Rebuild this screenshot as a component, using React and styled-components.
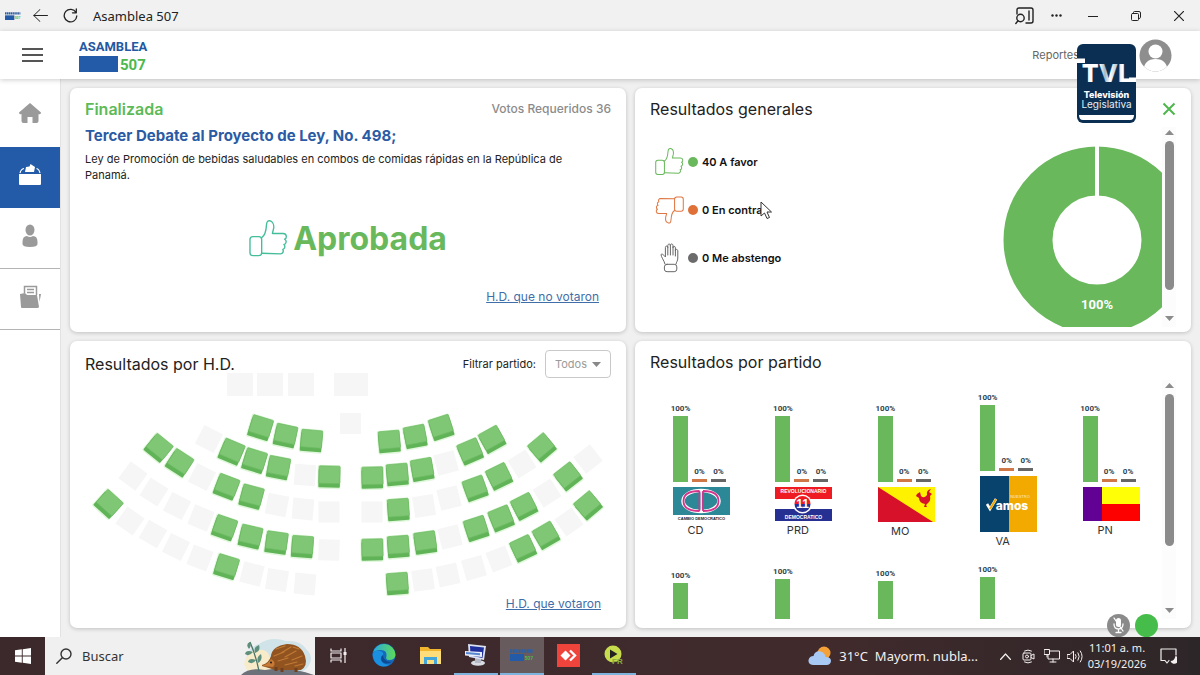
import React from "react";
import styled, { createGlobalStyle } from "styled-components";

const GlobalStyle = createGlobalStyle`
  * { box-sizing: border-box; }
  body { margin: 0; background: #f0f0f0; font-family: Inter, "Open Sans", sans-serif; color: #222; }
  button { border: 0; padding: 0; background: none; font: inherit; color: inherit; cursor: pointer; }
  h1, h2, p, ul, figure { margin: 0; padding: 0; }
  ul { list-style: none; }
  svg { display: block; }
`;

const SYSTEM_FONT = `"Noto Sans", "Open Sans", sans-serif`;

/* ---------- window shell ---------- */

const Screen = styled.div`
  display: flex;
  flex-direction: column;
  height: 100vh;
  min-height: 640px;
`;

const TitleBar = styled.div`
  display: flex;
  align-items: center;
  flex: none;
  height: 31px;
  padding: 0 0 0 4px;
  background: #f1f1f1;
  color: #222;
  font: 13px/20px ${SYSTEM_FONT};
`;

const BarButton = styled.button`
  display: grid;
  place-items: center;
  flex: none;
  width: ${(p) => p.$w || 30}px;
  height: 30px;
`;

const WindowTitle = styled.span`
  margin-left: 11px;
  flex: 1;
`;

const TopBar = styled.header`
  position: relative;
  z-index: 2;
  display: flex;
  align-items: center;
  flex: none;
  height: 48px;
  padding: 0 28px 0 22px;
  background: #fff;
  box-shadow: 0 1px 5px rgba(0, 0, 0, 0.2);
`;

const Brand = styled.a`
  margin-left: 36px;
  margin-right: auto;
`;

const TopLink = styled.a`
  margin-right: 60px;
  color: #666;
  font-size: 11px;
  text-decoration: none;
`;

const Channel = styled.div`
  position: absolute;
  top: 13px;
  right: 64px;
`;

const Body = styled.div`
  position: relative;
  display: flex;
  flex: 1;
  min-height: 0;
`;

const Sidebar = styled.nav`
  flex: none;
  width: 61px;
  background: #fff;
  border-right: 1px solid #e2e2e2;
`;

const SideItem = styled.button`
  display: grid;
  place-items: center;
  width: 100%;
  height: ${(p) => (p.$first ? 68 : 61)}px;
  padding-bottom: ${(p) => (p.$first ? 0 : 5)}px;
  color: ${(p) => (p.$active ? "#fff" : "#9a9a9a")};
  background: ${(p) => (p.$active ? "#235ba8" : "#fff")};
  border-bottom: ${(p) => (p.$line ? "1px solid #b4b4b4" : "0")};
`;

const Panels = styled.main`
  display: grid;
  flex: 1;
  min-width: 0;
  grid-template-columns: repeat(2, minmax(0, 1fr));
  grid-template-rows: minmax(0, 244fr) minmax(0, 287fr);
  gap: 9px;
  padding: 9px;
`;

const Card = styled.section`
  display: flex;
  flex-direction: column;
  min-height: 0;
  padding: ${(p) => p.$pad};
  background: #fff;
  border-radius: 7px;
  box-shadow: 0 1px 4px rgba(0, 0, 0, 0.2);
`;

const CardHead = styled.div`
  display: flex;
  align-items: center;
  justify-content: space-between;
  flex: none;
  height: ${(p) => p.$h || 20}px;
`;

const CardTitle = styled.h2`
  font-size: 16px;
  line-height: 20px;
  font-weight: 400;
`;

/* ---------- vote summary ---------- */

const Status = styled.span`
  color: #5cba57;
  font-size: 16px;
  line-height: 20px;
  font-weight: 600;
`;

const Required = styled.span`
  color: #8b8b8b;
  font-size: 12px;
  line-height: 20px;
  font-weight: 500;
`;

const BillTitle = styled.h1`
  margin-top: 7px;
  color: #2b5ba4;
  font-size: 15px;
  line-height: 20px;
  font-weight: 700;
`;

const BillText = styled.p`
  margin-top: 5px;
  max-width: 500px;
  font-size: 11px;
  line-height: 16px;
`;

const Verdict = styled.div`
  display: flex;
  align-items: center;
  justify-content: center;
  gap: 5px;
  flex: 1;
  padding-top: 6px;
  color: #69b85c;
  font-size: 32px;
  line-height: 40px;
  font-weight: 700;
`;

const VoteLink = styled.a`
  align-self: flex-end;
  margin-right: ${(p) => p.$inset}px;
  color: #3f6ea8;
  font-size: 12px;
  line-height: 16px;
  text-decoration: underline;
`;

/* ---------- general results ---------- */

const Close = styled.button`
  width: 14px;
  height: 14px;
  color: #4fb64c;
`;

const ScrollArea = styled.div`
  display: flex;
  flex: 1;
  min-height: 0;
  margin-top: 8px;
`;

const VoteList = styled.ul`
  flex: 1;
  padding: 11px 0 0 5px;
`;

const VoteItem = styled.li`
  display: flex;
  align-items: center;
  height: 48px;
  font-size: 11px;
  font-weight: 600;
  color: #111;
`;

const VoteIcon = styled.span`
  display: grid;
  place-items: center;
  width: 29px;
`;

const Dot = styled.i`
  width: 10px;
  height: 10px;
  margin: 0 4px;
  border-radius: 50%;
  background: ${(p) => p.$color};
`;

const DonutBox = styled.div`
  flex: none;
  align-self: flex-end;
`;

const Rail = styled.div`
  display: flex;
  flex-direction: column;
  align-items: center;
  flex: none;
  width: 14px;
  padding: 3px 0 6px;
  gap: 6px;
  background: #fcfcfc;
`;

const Track = styled.div`
  display: flex;
  flex: 1;
`;

const Thumb = styled.div`
  width: 9px;
  height: ${(p) => p.$size}%;
  border-radius: 5px;
  background: #8b8b8b;
`;

/* ---------- seats ---------- */

const Filter = styled.label`
  display: flex;
  align-items: center;
  gap: 9px;
  font-size: 11px;
`;

const SelectWrap = styled.span`
  display: grid;
  align-items: center;
  > * { grid-area: 1 / 1; }
  > svg { justify-self: end; margin-right: 10px; pointer-events: none; }
`;

const Select = styled.select`
  appearance: none;
  width: 66px;
  height: 28px;
  padding: 0 9px;
  border: 1px solid #c9c9c9;
  border-radius: 4px;
  background: #fff;
  color: #9a9a9a;
  font: 11px Inter, sans-serif;
`;

const SeatMap = styled.svg`
  flex: 1;
  width: 100%;
  min-height: 0;
  margin-top: -5px;
`;

/* ---------- parties ---------- */

const PartyGrid = styled.div`
  display: grid;
  flex: 1;
  grid-template-columns: repeat(5, 1fr);
  grid-auto-rows: max-content;
  align-items: center;
  row-gap: 16px;
  padding-top: 13px;
  overflow: hidden;
`;

const Party = styled.figure`
  width: 57px;
  margin-left: 23px;
`;

const Bars = styled.div`
  display: flex;
  align-items: flex-end;
  gap: 4px;
  margin-bottom: 5px;
`;

const Bar = styled.div`
  display: flex;
  flex-direction: column;
  align-items: center;
  gap: 2px;
  width: 15px;
  white-space: nowrap;
  color: #2f3f4c;
  font: 700 8px/10px Roboto, sans-serif;
  &::after {
    content: "";
    width: 15px;
    height: ${(p) => p.$h}px;
    background: ${(p) => p.$color};
  }
`;

const PartyLogo = styled.div`
  height: ${(p) => p.$h}px;
`;

const PartyName = styled.figcaption`
  margin: 1px 12px 0 0;
  color: #333;
  font-size: 11px;
  line-height: 16px;
  text-align: center;
`;

const Floating = styled.div`
  position: absolute;
  right: 42px;
  bottom: 0;
  display: flex;
  gap: 5px;
`;

const RoundButton = styled.button`
  display: grid;
  place-items: center;
  width: 23px;
  height: 23px;
  border-radius: 50%;
  background: ${(p) => p.$bg};
`;

const ContraText = styled.span`
  position: relative;
  white-space: nowrap;
`;

const Pointer = styled.svg`
  position: absolute;
  left: calc(100% - 3px);
  top: -2px;
`;

/* ---------- taskbar ---------- */

const TaskBar = styled.footer`
  display: flex;
  flex: none;
  height: 38px;
  background: linear-gradient(90deg, #3b292c, #402a2c 70%, #2d2628);
  color: #f4f0f0;
  font: 13px/18px ${SYSTEM_FONT};
`;

const Start = styled.button`
  display: grid;
  place-items: center;
  width: 45px;
`;

const Search = styled.label`
  display: flex;
  align-items: center;
  width: 270px;
  padding-left: 11px;
  background: #f0f0f0;
  color: #333;
`;

const SearchInput = styled.input`
  flex: 1;
  min-width: 0;
  margin-left: 10px;
  padding: 0;
  border: 0;
  outline: 0;
  background: none;
  font: 13px ${SYSTEM_FONT};
  color: #333;
  &::placeholder { color: #333; opacity: 1; }
`;

const Task = styled.button`
  display: grid;
  place-items: center;
  width: 44px;
  margin: 0 1px;
  border-bottom: 2px solid ${(p) => (p.$open ? "#7cb4dd" : "transparent")};
  background: ${(p) => (p.$active ? "#675b5e" : "none")};
  background-clip: padding-box;
`;

const Tray = styled.div`
  display: flex;
  align-items: center;
  margin-left: auto;
  padding-right: 12px;
`;

const Weather = styled.button`
  display: flex;
  align-items: center;
  gap: 7px;
  margin-right: 16px;
`;

const TrayButton = styled.button`
  display: grid;
  place-items: center;
  width: ${(p) => p.$w || 23}px;
  height: 38px;
`;

const Clock = styled.time`
  width: 62px;
  font-size: 11px;
  line-height: 16px;
  text-align: center;
`;

/* ---------- drawings ---------- */

const stroke = { fill: "none", stroke: "currentColor", strokeLinecap: "round", strokeLinejoin: "round" };

function ThumbIcon({ color, size, down, weight = 1.4 }) {
  return (
    <svg width={size} height={size} viewBox="-1 0 40 39" style={{ color }}>
      <g {...stroke} strokeWidth={weight} transform={down ? "rotate(180 19 18.5)" : undefined}>
        <rect x="0" y="16.5" width="12" height="19.5" rx="3" />
        <path d="M12 17.5C15 15.8 16.5 12 17 4C17.2 1 18.5 0 20.3 .3C23.3 1 24.8 4.5 24.3 8L23 13.3H34C38 13.3 38 18.2 35.6 19.2C38 20.7 37.3 24.2 34.8 24.6C36.5 26.4 35.8 29 33.7 29.6C34.8 31.8 33.6 34.2 31.4 34.2L12 33.6" />
      </g>
    </svg>
  );
}

function HandIcon() {
  return (
    <svg width="20" height="30" viewBox="0 0 20 30" style={{ color: "#666" }}>
      <g {...stroke} strokeWidth="1">
        <path d="M5 21C4 17 1 14 1 11.5C2.6 10.3 4 12.5 5.4 14V4.4C5.4 2.6 7.8 2.6 7.8 4.4V2.6C7.8 .6 10.4 .6 10.4 2.6V2.2C10.6 .4 13 .6 13 2.6V4.6C13.2 3 15.4 3 15.4 4.8V7.5C15.6 6 17.8 6 17.8 8V15C17.8 18 16.3 19 16 21" />
        <path d="M7.8 4.4V12M10.4 2.6V12M13 4V12M15.4 7V13" />
        <rect x="4.4" y="21.3" width="12.4" height="7.4" rx="2.6" />
      </g>
    </svg>
  );
}

function BrandLogo() {
  return (
    <svg width="72" height="40" viewBox="0 0 72 40" role="img" aria-label="Asamblea 507">
      <text x="0" y="16" fontFamily="Roboto, sans-serif" fontWeight="700" fontSize="13" fill="#2358a2">ASAMBLEA</text>
      <rect x="0" y="21" width="39" height="16" fill="#235ba8" />
      <text x="41" y="35" fontFamily="Roboto, sans-serif" fontWeight="700" fontSize="15" fill="#4cb84d">507</text>
    </svg>
  );
}

function ChannelLogo() {
  return (
    <svg width="59" height="79" viewBox="0 0 59 79">
      <defs>
        <linearGradient id="ribbon" x1="0" x2="1">
          <stop offset="0" stopColor="#fff" />
          <stop offset=".36" stopColor="#fff" />
          <stop offset=".46" stopColor="#9fb9cd" />
          <stop offset=".56" stopColor="#fff" />
          <stop offset=".7" stopColor="#b4c8d8" />
          <stop offset=".8" stopColor="#fff" />
        </linearGradient>
      </defs>
      <rect width="59" height="79" rx="6" fill="#0b2f52" />
      <path d="M0 14.400H8V19H0ZM52 33.400H59V38H52Z" fill="#fff" />
      <text x="30" y="38" textAnchor="middle" fontFamily="Inter, sans-serif" fontWeight="800" fontSize="25" fill="url(#ribbon)">TVL</text>
      <text x="29.500" y="54" textAnchor="middle" fontFamily="Inter, sans-serif" fontWeight="800" fontSize="9" fill="#fff">Televisión</text>
      <text x="29.500" y="64" textAnchor="middle" fontFamily="Inter, sans-serif" fontSize="10" fill="#e7edf3">Legislativa</text>
      <path d="M2 71H57Q57 76 53 76H6Q2 76 2 71Z" fill="#fff" />
    </svg>
  );
}

function Donut() {
  return (
    <svg width="159" height="181" viewBox="1003 146 159 181" role="img" aria-label="100% a favor">
      <circle cx="1097" cy="240" r="69" fill="none" stroke="#69b85c" strokeWidth="49" />
      <path d="M1097 146V197" stroke="#fff" strokeWidth="4" />
      <text x="1097" y="309" textAnchor="middle" fontFamily="Roboto, sans-serif" fontWeight="700" fontSize="13" fill="#fff">100%</text>
    </svg>
  );
}

function ScrollRail({ size }) {
  return (
    <Rail>
      <svg width="9" height="5"><path d="M0 5L4.500 0L9 5Z" fill="#8b8b8b" /></svg>
      <Track><Thumb $size={size} /></Track>
      <svg width="9" height="5"><path d="M0 0L4.500 5L9 0Z" fill="#8b8b8b" /></svg>
    </Rail>
  );
}

/* seat centre x, centre y, rotation in degrees */
const VOTED = [
  [260, 428, 17], [285, 436, 12], [311, 441, 5], [231, 452, 23], [254, 461, 17], [278, 468, 11], [329, 477, 1],
  [158, 448, 39], [179, 463, 33], [226, 487, 21], [251, 497, 15], [108, 504, 42],
  [224, 528, 19], [250, 537, 13], [276, 543, 8], [302, 547, 4], [226, 567, 17],
  [389, 442, -5], [415, 437, -11], [441, 428, -18], [470, 452, -23], [492, 440, -29], [542, 448, -40],
  [372, 478, -1], [397, 475, -5], [422, 470, -10], [475, 489, -20], [499, 477, -26], [568, 477, -38],
  [398, 510, -4], [372, 550, -1], [398, 547, -4], [425, 543, -8], [476, 529, -18], [501, 519, -22],
  [524, 507, -27], [588, 506, -40], [523, 549, -25], [546, 536, -30], [397, 584, -4],
];

const EMPTY = [
  [209, 439, 27], [133, 476, 36], [154, 492, 32], [177, 506, 27], [201, 518, 22], [202, 477, 27], [305, 475, 4],
  [277, 505, 11], [303, 509, 5], [329, 512, 0], [130, 521, 35], [153, 534, 30], [176, 547, 26], [200, 558, 21],
  [329, 550, 2], [252, 574, 14], [277, 580, 9], [305, 584, 5], [446, 463, -15], [522, 464, -32], [588, 459, -38],
  [372, 512, 0], [424, 506, -9], [449, 498, -14], [547, 493, -32], [450, 537, -14], [569, 522, -35],
  [423, 580, -8], [448, 575, -12], [474, 568, -16], [499, 559, -21],
];

const DESKS = [[227, 373, 26, 23], [257, 373, 26, 23], [288, 373, 26, 23], [334, 373, 34, 23], [340, 413, 21, 21]];

function Seats() {
  return (
    <SeatMap viewBox="85 373 526 223" role="img" aria-label="Votos por curul">
      <g fill="#f6f6f6">
        {DESKS.map(([x, y, w, h]) => <rect key={x} x={x} y={y} width={w} height={h} />)}
        {EMPTY.map(([x, y, a]) => (
          <rect key={`${x}-${y}`} x="-10.500" y="-10.500" width="21" height="21" transform={`translate(${x} ${y}) rotate(${a})`} />
        ))}
      </g>
      {VOTED.map(([x, y, a]) => (
        <g key={`${x}-${y}`} transform={`translate(${x} ${y}) rotate(${a})`}>
          <rect x="-11.500" y="-12" width="23" height="24" rx="2" fill="#dff7da" />
          <rect x="-10.500" y="-8" width="21.500" height="18.500" rx="1" fill="#60b356" />
          <rect x="-10" y="-11" width="21" height="17.500" rx="1" fill="#7fc675" stroke="#6dbb63" strokeWidth=".7" />
        </g>
      ))}
    </SeatMap>
  );
}

const logoText = { textAnchor: "middle", fontFamily: "Liberation Sans, sans-serif", fontWeight: 700 };

const LOGOS = {
  CD: (
    <svg width="57" height="34" viewBox="0 0 57 34">
      <rect width="57" height="28" fill="#2c8797" />
      <ellipse cx="28" cy="14" rx="18" ry="10.500" fill="none" stroke="#fff" strokeWidth="3.500" />
      <path d="M26.500 4V24M30 4V24M26.500 4Q10.500 4 10.500 14T26.500 24M30 4Q45.500 4 45.500 14T30 24" fill="none" stroke="#d5348c" strokeWidth="1.800" />
      <path d="M28.200 4V24" stroke="#fff" strokeWidth="1.200" />
      <text {...logoText} x="28.500" y="32.500" fontSize="4" fill="#222">CAMBIO DEMOCRATICO</text>
    </svg>
  ),
  PRD: (
    <svg width="57" height="34" viewBox="0 0 57 34">
      <rect width="57" height="34" fill="#fff" />
      <rect width="57" height="12" fill="#ee1c22" />
      <rect y="22" width="57" height="12" fill="#262f92" />
      <circle cx="27.500" cy="17" r="9.500" fill="#fff" />
      <path d="M19.500 17A8 8 0 0 1 35.500 17Z" fill="#ee1c22" />
      <path d="M19.500 17A8 8 0 0 0 35.500 17Z" fill="#262f92" />
      <text {...logoText} x="27.500" y="21" fontSize="12" fill="#fff">11</text>
      <text {...logoText} x="28.500" y="6" fontSize="5" fill="#fff">REVOLUCIONARIO</text>
      <text {...logoText} x="28.500" y="32" fontSize="5" fill="#fff">DEMOCRATICO</text>
    </svg>
  ),
  MO: (
    <svg width="57" height="35" viewBox="0 0 57 35">
      <rect width="57" height="35" fill="#fff200" />
      <path d="M0 0L55 35H0Z" fill="#d8112b" />
      <path d="M39 7L42 5L43 9Q46 12 49 8Q48 3 53 2L51 5L54 7L52 9Q53 14 50 16L48 18L49 20H46L47 17Q41 16 41 11L38 9Z" fill="#d8112b" />
    </svg>
  ),
  VA: (
    <svg width="57" height="56" viewBox="0 0 57 56">
      <rect width="29" height="56" fill="#07436d" />
      <rect x="29" width="28" height="56" fill="#f2a900" />
      <path d="M7 28L10 33L16 23" fill="none" stroke="#fff" strokeWidth="2.600" />
      <path d="M10 33L16 23" stroke="#f2a900" strokeWidth="2" />
      <text {...logoText} fontFamily="Inter, sans-serif" fontWeight="800" x="32" y="34" fontSize="12" fill="#fff">amos</text>
      <text {...logoText} x="40" y="22" fontSize="4" fill="#f9d88c">NUESTRO</text>
    </svg>
  ),
  PN: (
    <svg width="57" height="34" viewBox="0 0 57 34">
      <rect width="57" height="34" fill="#fd0100" />
      <rect x="19" width="38" height="17" fill="#ffff05" />
      <rect width="19" height="34" fill="#620295" />
    </svg>
  ),
};

const PARTIES = [
  { name: "CD", h: 34 }, { name: "PRD", h: 34 }, { name: "MO", h: 35 }, { name: "VA", h: 56 }, { name: "PN", h: 34 },
  { h: 36 }, { h: 44 }, { h: 40 }, { h: 48 },
];

function EchidnaArt() {
  return (
    <svg width="74" height="37" viewBox="0 0 74 37">
      <path d="M5 24Q5 10 18 6Q30 -2 45 3Q60 2 66 12Q74 20 66 30Q60 36 40 36Q10 36 5 24Z" fill="#cfe3e8" />
      <path d="M3 26Q6 12 18 12Q28 10 30 24V36H8Z" fill="#f7ebca" />
      <path d="M0 37Q8 29 24 32Q48 28 73 37Z" fill="#6d7179" />
      <path d="M21 27Q28 25 30 18Q31 8 46 6Q60 6 64 18Q67 28 60 32H34Q28 30 21 28Z" fill="#91531f" />
      <path d="M35 11L44 8M40 15L50 9M33 18L43 14M44 19L55 13M51 22L61 18M37 23L47 20M44 27L56 24M54 28L62 26M52 9L58 11" stroke="#c07a35" strokeWidth="1.200" strokeLinecap="round" />
      <path d="M30 21Q36 24 32 29L21 28Q27 26 30 21Z" fill="#c67a36" />
      <circle cx="30" cy="24.500" r="1" fill="#222" />
      <path d="M35 29V33M41 30V34M55 30V34" stroke="#70401e" strokeWidth="3" />
      <path d="M18 33Q15 18 9 4" fill="none" stroke="#4b7565" strokeWidth="1.300" />
      <path d="M9 4Q4 6 8 11Q11 8 9 4ZM12 14Q5 11 4 16Q8 19 12 14ZM14 15Q20 13 18 7Q12 9 14 15ZM15 22Q8 19 7 24Q12 27 15 22ZM17 25Q22 22 20 16Q15 19 17 25Z" fill="#5e8f7c" />
    </svg>
  );
}

function EdgeLogo() {
  return (
    <svg width="24" height="24" viewBox="0 0 24 24">
      <defs>
        <linearGradient id="edgeTop" x1="0" x2="1"><stop offset="0" stopColor="#2aa8e0" /><stop offset="1" stopColor="#5ddb57" /></linearGradient>
      </defs>
      <circle cx="12" cy="12" r="11.500" fill="#1469bd" />
      <path d="M.8 10A11.500 11.500 0 0 1 23.500 12Q23 17 17 17Q13 17 14.500 13Q15 7 9 7Q3 7 .8 10Z" fill="url(#edgeTop)" />
      <path d="M.6 11Q3 6.500 8 8Q12 9 11 12Q8 13 9 17Q11 22 18 21.500Q13 25 7 22.500Q1 19 .6 11Z" fill="#1b8fe0" />
      <path d="M11 12Q8 15 10 18.500Q14 22.500 20.500 18.500Q16 19.500 14 17.500Q11 15.500 11 12Z" fill="#0c4a91" />
    </svg>
  );
}

function PersonalComputer() {
  return (
    <svg width="24" height="24" viewBox="0 0 24 24">
      <ellipse cx="14" cy="20" rx="7" ry="2.800" fill="#d8dbe2" />
      <path d="M11 14H17V20H11Z" fill="#b5bac6" />
      <path d="M4 1L22 3L20 17L5 14Z" fill="#d9e1f2" />
      <path d="M6 3L20 4.500L18.500 15L6.500 12.500Z" fill="#1f2f9c" />
      <path d="M1 8L18 9V14L1 12.500Z" fill="#e8eefb" /><path d="M2 10L16 11.200" stroke="#5687cf" strokeWidth="2" />
    </svg>
  );
}

function MiniBrand({ width }) {
  return (
    <svg width={width} height={width / 2} viewBox="0 0 24 12">
      <path d="M0 2H23" stroke="#315f9e" strokeWidth="3.500" strokeDasharray="2.200 .6" />
      <rect y="5" width="14" height="7" fill="#235ba8" />
      <text x="14.500" y="10.500" fontFamily="Roboto, sans-serif" fontWeight="700" fontSize="5" fill="#55b84d">507</text>
    </svg>
  );
}

/* ---------- page ---------- */

export default function App() {
  return (
    <Screen>
      <GlobalStyle />
      <TitleBar>
        <BarButton $w={18} aria-label="Aplicación"><MiniBrand width={16} /></BarButton>
        <BarButton $w={36} aria-label="Atrás">
          <svg width="15" height="13" viewBox="0 0 15 13"><path {...stroke} d="M14.500 6.500H.8M7 .5L.8 6.500L7 12.500" /></svg>
        </BarButton>
        <BarButton $w={24} aria-label="Actualizar">
          <svg width="15" height="15" viewBox="0 0 15 15"><path {...stroke} strokeWidth="1.300" d="M13 4.500A6.300 6.300 0 1 0 13.800 8M13.300 1V4.800H9.500" /></svg>
        </BarButton>
        <WindowTitle>Asamblea 507</WindowTitle>
        <BarButton $w={32} aria-label="Buscar en la página">
          <svg width="19" height="18" viewBox="0 0 19 18">
            <g {...stroke} strokeWidth="1.400"><path d="M2 7V3Q2 1 4 1H16Q18 1 18 3V14Q18 16 16 16H11M14 4V13" /><circle cx="5.500" cy="11" r="3.700" /><path d="M3 13.800L.8 16.500" /></g>
          </svg>
        </BarButton>
        <BarButton $w={32} aria-label="Más">
          <svg width="11" height="3"><g fill="currentColor"><circle cx="1.500" cy="1.500" r="1.200" /><circle cx="5.500" cy="1.500" r="1.200" /><circle cx="9.500" cy="1.500" r="1.200" /></g></svg>
        </BarButton>
        <BarButton $w={42} aria-label="Minimizar"><svg width="10" height="10"><path d="M0 5.500H10" stroke="currentColor" /></svg></BarButton>
        <BarButton $w={44} aria-label="Restaurar">
          <svg width="10" height="10" viewBox="0 0 10 10"><path {...stroke} d="M2.500 2.500V1.500Q2.500 .5 3.500 .5H8Q9.500 .5 9.500 2V6.500Q9.500 7.500 8 7.500" /><rect {...stroke} x=".5" y="2.500" width="7" height="7" rx="1" /></svg>
        </BarButton>
        <BarButton $w={42} aria-label="Cerrar"><svg width="10" height="10"><path d="M0 0L10 10M10 0L0 10" stroke="currentColor" strokeWidth="1.200" /></svg></BarButton>
      </TitleBar>

      <TopBar>
        <button aria-label="Menú">
          <svg width="21" height="14" viewBox="0 0 21 14"><path d="M0 1H21M0 7H21M0 13H21" stroke="#555" strokeWidth="1.800" /></svg>
        </button>
        <Brand href="#inicio"><BrandLogo /></Brand>
        <TopLink href="#reportes">Reportes</TopLink>
        <button aria-label="Perfil">
          <svg width="33" height="33" viewBox="0 0 33 33">
            <clipPath id="avatar"><circle cx="16.500" cy="16.500" r="16" /></clipPath>
            <g clipPath="url(#avatar)"><rect width="33" height="33" fill="#8e8e8e" /><circle cx="16.500" cy="12.500" r="7" fill="#fff" /><path d="M4 33Q5 20 16.500 20T29 33Z" fill="#fff" /></g>
          </svg>
        </button>
        <Channel><ChannelLogo /></Channel>
      </TopBar>

      <Body>
        <Sidebar>
          <SideItem $first aria-label="Inicio">
            <svg width="22" height="20" viewBox="0 0 22 20" fill="currentColor"><path d="M11 0L22 9.500Q22 12 19.500 11V18Q19.500 20 17.500 20H13.500V14H8.500V20H4.500Q2.500 20 2.500 18V11Q0 12 0 9.500Z" /></svg>
          </SideItem>
          <SideItem $active aria-label="Votaciones">
            <svg width="24" height="24" viewBox="0 0 24 24" fill="currentColor"><path d="M8 4L11.500 3.500L12.500 1L17 4L16 9H7ZM1 11H23V21Q23 22 22 22H2Q1 22 1 21Z" /><path d="M2 10Q3 6 6 5.500M18.500 5.500Q21 6 22 10" fill="none" stroke="currentColor" strokeWidth="1.100" /></svg>
          </SideItem>
          <SideItem $line aria-label="Diputados">
            <svg width="16" height="24" viewBox="0 0 16 24" fill="currentColor"><ellipse cx="8" cy="6" rx="4.500" ry="5.500" /><path d="M.5 18Q.5 12 5 12Q8 14 11 12Q15.500 12 15.500 18V20Q15.500 23 8 23T.5 20Z" /></svg>
          </SideItem>
          <SideItem $line aria-label="Documentos">
            <svg width="22" height="24" viewBox="0 0 22 24" fill="currentColor"><path d="M1 9L6 8L8 10H18L20 22Q20 23 18 23H3Q2 23 2 22Z" /><path d="M5.500 8V1.500H17.500V10M8 4.500H15M8 7.500H15" fill="none" stroke="currentColor" strokeWidth="1.500" /><path d="M20 9H22L20.500 17Z" /></svg>
          </SideItem>
        </Sidebar>

        <Panels>
          <Card $pad="11px 15px 27px">
            <CardHead><Status>Finalizada</Status><Required>Votos Requeridos 36</Required></CardHead>
            <BillTitle>Tercer Debate al Proyecto de Ley, No. 498;</BillTitle>
            <BillText>Ley de Promoción de bebidas saludables en combos de comidas rápidas en la República de Panamá.</BillText>
            <Verdict><ThumbIcon color="#43bd9a" size={39} />Aprobada</Verdict>
            <VoteLink $inset={12} href="#no-votaron">H.D. que no votaron</VoteLink>
          </Card>

          <Card $pad="11px 15px 5px">
            <CardHead>
              <CardTitle>Resultados generales</CardTitle>
              <Close aria-label="Cerrar panel"><svg width="14" height="14"><path d="M1.500 1.500L12.500 12.500M12.500 1.500L1.500 12.500" stroke="currentColor" strokeWidth="2" /></svg></Close>
            </CardHead>
            <ScrollArea>
              <VoteList>
                <VoteItem><VoteIcon><ThumbIcon color="#69b85c" size={29} /></VoteIcon><Dot $color="#69b85c" />40 A favor</VoteItem>
                <VoteItem>
                  <VoteIcon><ThumbIcon color="#df7742" size={29} down /></VoteIcon><Dot $color="#df7138" />
                  <ContraText>
                    0 En contra
                    <Pointer width="13" height="19" viewBox="0 0 13 19"><path d="M1 1V15L4.500 12L7 17.500L9.500 16.500L7 11H11.500Z" fill="#fff" stroke="#333" /></Pointer>
                  </ContraText>
                </VoteItem>
                <VoteItem><VoteIcon><HandIcon /></VoteIcon><Dot $color="#6b6b6b" />0 Me abstengo</VoteItem>
              </VoteList>
              <DonutBox><Donut /></DonutBox>
              <ScrollRail size={88} />
            </ScrollArea>
          </Card>

          <Card $pad="9px 15px 16px">
            <CardHead $h={28}>
              <CardTitle>Resultados por H.D.</CardTitle>
              <Filter>
                Filtrar partido:
                <SelectWrap>
                  <Select defaultValue="todos"><option value="todos">Todos</option></Select>
                  <svg width="9" height="5"><path d="M0 0H9L4.500 5Z" fill="#888" /></svg>
                </SelectWrap>
              </Filter>
            </CardHead>
            <Seats />
            <VoteLink $inset={10} href="#votaron">H.D. que votaron</VoteLink>
          </Card>

          <Card $pad="11px 15px 9px">
            <CardHead><CardTitle>Resultados por partido</CardTitle></CardHead>
            <ScrollArea>
              <PartyGrid>
                {PARTIES.map((p, i) => (
                  <Party key={i}>
                    <Bars>
                      <Bar $h={66} $color="#69b85c">100%</Bar>
                      <Bar $h={3} $color="#cf7747">{p.name && "0%"}</Bar>
                      <Bar $h={3} $color="#666">{p.name && "0%"}</Bar>
                    </Bars>
                    <PartyLogo $h={p.h}>{LOGOS[p.name]}</PartyLogo>
                    <PartyName>{p.name}</PartyName>
                  </Party>
                ))}
              </PartyGrid>
              <ScrollRail size={73} />
            </ScrollArea>
          </Card>
        </Panels>

        <Floating>
          <RoundButton $bg="#8a8a8a" aria-label="Micrófono">
            <svg width="13" height="17" viewBox="0 0 13 17" style={{ color: "#fff" }}><rect x="4" y="1" width="5" height="9" rx="2.500" fill="#fff" /><path {...stroke} strokeWidth="1.300" d="M2 7Q2 12 6.500 12T11 7M6.500 12V15.500M4 15.500H9M2 1L11 14" /></svg>
          </RoundButton>
          <RoundButton $bg="#46bd4a" aria-label="Conectado" />
        </Floating>
      </Body>

      <TaskBar>
        <Start aria-label="Inicio de Windows">
          <svg width="16" height="16" viewBox="0 0 16 16" fill="#fff"><path d="M0 2.300L6.800 1.300V7.500H0ZM7.700 1.200L16 0V7.500H7.700ZM0 8.400H6.800V14.700L0 13.700ZM7.700 8.400H16V16L7.700 14.800Z" /></svg>
        </Start>
        <Search>
          <svg width="16" height="16" viewBox="0 0 16 16"><g {...stroke} strokeWidth="1.400"><circle cx="10" cy="6" r="5" /><path d="M6.300 9.700L.8 15.200" /></g></svg>
          <SearchInput placeholder="Buscar" aria-label="Buscar" />
          <EchidnaArt />
        </Search>
        <Task aria-label="Vista de tareas">
          <svg width="17" height="15" viewBox="0 0 17 15"><g {...stroke} strokeWidth="1.200" strokeLinecap="butt"><path d="M1 .5V3H11V.5M1 14.500V12H11V14.500M15 0V15" /><rect x="1" y="5" width="10" height="5" /></g><rect x="13.500" y="4" width="3" height="3" fill="currentColor" /></svg>
        </Task>
        <Task aria-label="Edge"><EdgeLogo /></Task>
        <Task aria-label="Archivos">
          <svg width="21" height="19" viewBox="0 0 21 19"><path d="M0 1H8L10 3H21V18H0Z" fill="#f1b62d" /><path d="M0 5H21V18H0Z" fill="#fddc7a" /><path d="M4 18V11H17V18H14V14H7V18Z" fill="#43a6d9" /></svg>
        </Task>
        <Task $open aria-label="Equipo"><PersonalComputer /></Task>
        <Task $open $active aria-label="Asamblea 507"><MiniBrand width={24} /></Task>
        <Task aria-label="AnyDesk">
          <svg width="23" height="23" viewBox="0 0 23 23"><rect width="23" height="23" fill="#ef443b" /><path d="M8.500 6.500L13.500 11.500L8.500 16.500L3.500 11.500Z" fill="#fff" /><path d="M13 6.500L18 11.500L13 16.500" fill="none" stroke="#fff" strokeWidth="2.400" /></svg>
        </Task>
        <Task $open aria-label="Reproductor">
          <svg width="23" height="23" viewBox="0 0 23 23"><circle cx="10" cy="10" r="8.500" fill="#c7dd4d" /><path d="M7 5.500L14.500 10L7 14.500Z" fill="#222" /><text x="9" y="20" fontFamily="Liberation Sans, sans-serif" fontWeight="700" fontSize="8" fill="#8aab3c">FR</text></svg>
        </Task>
        <Tray>
          <Weather>
            <svg width="24" height="20" viewBox="0 0 24 20"><circle cx="16" cy="7" r="6.500" fill="#f5a13a" /><path d="M5 19Q0 18.500 .5 14Q1.500 10 5.500 10Q7 4.500 12.500 5.500Q17 6.500 17.500 11Q23 11 23 15Q22.500 19 18.500 19Z" fill="#a9c9f5" /></svg>
            <span>31°C</span><span>Mayorm. nubla...</span>
          </Weather>
          <TrayButton aria-label="Mostrar iconos"><svg width="11" height="7" viewBox="0 0 11 7"><path {...stroke} strokeWidth="1.200" d="M.5 6.500L5.500 1L10.500 6.500" /></svg></TrayButton>
          <TrayButton aria-label="Cámara">
            <svg width="13" height="15" viewBox="0 0 13 15"><g {...stroke}><rect x="1" y="4" width="8" height="7" rx="1" /><path d="M9 6.500L12 5V10L9 8.500M2.500 2Q6 0 9.500 2M2.500 13Q6 15 9.500 13" /><circle cx="5" cy="7.500" r="1.500" /></g></svg>
          </TrayButton>
          <TrayButton aria-label="Red">
            <svg width="16" height="14" viewBox="0 0 16 14"><g {...stroke}><path d="M6 2H15.500V10H4V6M9 10V13M6 13H12" /><rect x=".5" y=".5" width="5" height="5" /><path d="M3 5.500V8" /></g></svg>
          </TrayButton>
          <TrayButton aria-label="Volumen">
            <svg width="16" height="13" viewBox="0 0 16 13"><path {...stroke} d="M.5 4.500H3L6.500 1V12L3 8.500H.5ZM8.500 4.500Q10 6.500 8.500 8.500M11 2.800Q13.500 6.500 11 10.200M13.300 1Q17 6.500 13.300 12" /></svg>
          </TrayButton>
          <Clock>11:01 a. m.<br />03/19/2026</Clock>
          <TrayButton $w={40} aria-label="Notificaciones">
            <svg width="17" height="16" viewBox="0 0 17 16"><path {...stroke} strokeWidth="1.200" d="M9 12.500L7 15L5 12.500H1V1H16V7" /><path d="M15.500 8A4 4 0 1 1 10.500 13Q14.500 13 15.500 8Z" fill="currentColor" /></svg>
          </TrayButton>
        </Tray>
      </TaskBar>
    </Screen>
  );
}
